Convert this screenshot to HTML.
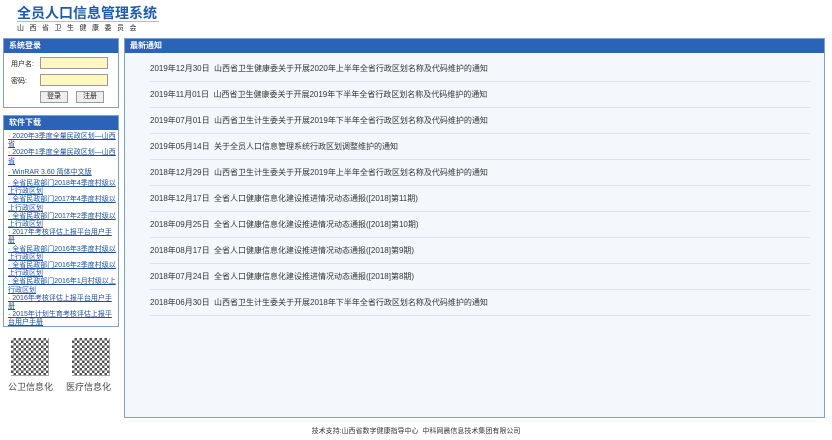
<!DOCTYPE html>
<html><head><meta charset="utf-8"><style>
*{margin:0;padding:0;box-sizing:border-box}
body{width:832px;height:440px;background:#fff;font-family:"Liberation Sans","Noto Sans CJK SC",sans-serif;position:relative;overflow:hidden;color:#222}
.abs{position:absolute}
.hd{background:#2a63b8;color:#fff;font-size:8px;font-weight:bold;height:14px;line-height:14px;padding-left:5px}
.box{border:1px solid #7fa1cf;background:#fff}
.lnk{font-size:7px;line-height:8.2px;color:#1a4fa8;text-decoration:underline;padding-left:4px;padding-right:2px}
.row{position:absolute;left:150px;width:660px;font-size:8px;height:26px;line-height:26px;border-bottom:1px solid #dde3ea;color:#333}
.qr{position:absolute;width:38px;height:38px;opacity:.85}
</style></head><body>
<div class="abs" style="left:17px;top:3px;font-size:14px;font-weight:bold;color:#1d5bb0;letter-spacing:0">全员人口信息管理系统</div>
<div class="abs" style="left:17px;top:21px;width:142px;border-top:1px solid #bbb;font-size:7px;letter-spacing:5.5px;color:#222;padding-top:1px">山西省卫生健康委员会</div>

<div class="abs box" style="left:3px;top:38px;width:116px;height:70px">
<div class="hd">系统登录</div>
<div class="abs" style="left:7px;top:20px;font-size:7px">用户名:</div>
<div class="abs" style="left:36px;top:18px;width:68px;height:12px;background:#fcf8c0;border:1px solid #999"></div>
<div class="abs" style="left:7px;top:37px;font-size:7px">密码:</div>
<div class="abs" style="left:36px;top:35px;width:68px;height:12px;background:#fcf8c0;border:1px solid #999"></div>
<div class="abs" style="left:36px;top:52px;width:28px;height:12px;border:1px solid #999;background:#eee;font-size:7px;text-align:center;line-height:10px">登录</div>
<div class="abs" style="left:72px;top:52px;width:28px;height:12px;border:1px solid #999;background:#eee;font-size:7px;text-align:center;line-height:10px">注册</div>
</div>

<div class="abs box" style="left:3px;top:115px;width:116px;height:212px;overflow:hidden">
<div class="hd">软件下载</div>
<div class="lnk" style="padding-top:3px">
<div>· 2020年3季度全量民政区划—山西省</div>
<div>· 2020年1季度全量民政区划—山西省</div>
<div style="margin:3px 0">· WinRAR 3.60 简体中文版</div>
<div>· 全省民政部门2018年4季度村级以上行政区划</div>
<div>· 全省民政部门2017年4季度村级以上行政区划</div>
<div>· 全省民政部门2017年2季度村级以上行政区划</div>
<div>· 2017年考核评估上报平台用户手册</div>
<div>· 全省民政部门2016年3季度村级以上行政区划</div>
<div>· 全省民政部门2016年2季度村级以上行政区划</div>
<div>· 全省民政部门2016年1月村级以上行政区划</div>
<div>· 2016年考核评估上报平台用户手册</div>
<div>· 2015年计划生育考核评估上报平台用户手册</div>
</div></div>

<div class="qr" style="left:11px;top:338px;background:repeating-conic-gradient(#333 0 25%,#fff 0 50%) 0 0/5px 5px"></div>
<div class="qr" style="left:72px;top:338px;background:repeating-conic-gradient(#333 0 25%,#fff 0 50%) 0 0/5px 5px"></div>
<div class="abs" style="left:8px;top:380px;font-size:9px;color:#444">公卫信息化</div>
<div class="abs" style="left:66px;top:380px;font-size:9px;color:#444">医疗信息化</div>

<div class="abs box" style="left:124px;top:38px;width:701px;height:380px;background:#f4f8fd">
<div class="hd">最新通知</div></div>
<div class="row" style="top:56px">2019年12月30日&nbsp; 山西省卫生健康委关于开展2020年上半年全省行政区划名称及代码维护的通知</div>
<div class="row" style="top:82px">2019年11月01日&nbsp; 山西省卫生健康委关于开展2019年下半年全省行政区划名称及代码维护的通知</div>
<div class="row" style="top:108px">2019年07月01日&nbsp; 山西省卫生计生委关于开展2019年下半年全省行政区划名称及代码维护的通知</div>
<div class="row" style="top:134px">2019年05月14日&nbsp; 关于全员人口信息管理系统行政区划调整维护的通知</div>
<div class="row" style="top:160px">2018年12月29日&nbsp; 山西省卫生计生委关于开展2019年上半年全省行政区划名称及代码维护的通知</div>
<div class="row" style="top:186px">2018年12月17日&nbsp; 全省人口健康信息化建设推进情况动态通报([2018]第11期)</div>
<div class="row" style="top:212px">2018年09月25日&nbsp; 全省人口健康信息化建设推进情况动态通报([2018]第10期)</div>
<div class="row" style="top:238px">2018年08月17日&nbsp; 全省人口健康信息化建设推进情况动态通报([2018]第9期)</div>
<div class="row" style="top:264px">2018年07月24日&nbsp; 全省人口健康信息化建设推进情况动态通报([2018]第8期)</div>
<div class="row" style="top:290px">2018年06月30日&nbsp; 山西省卫生计生委关于开展2018年下半年全省行政区划名称及代码维护的通知</div>

<div class="abs" style="left:0;top:426px;width:832px;text-align:center;font-size:7px;color:#333">技术支持:山西省数字健康指导中心&nbsp; 中科网晨信息技术集团有限公司</div>
</body></html>
